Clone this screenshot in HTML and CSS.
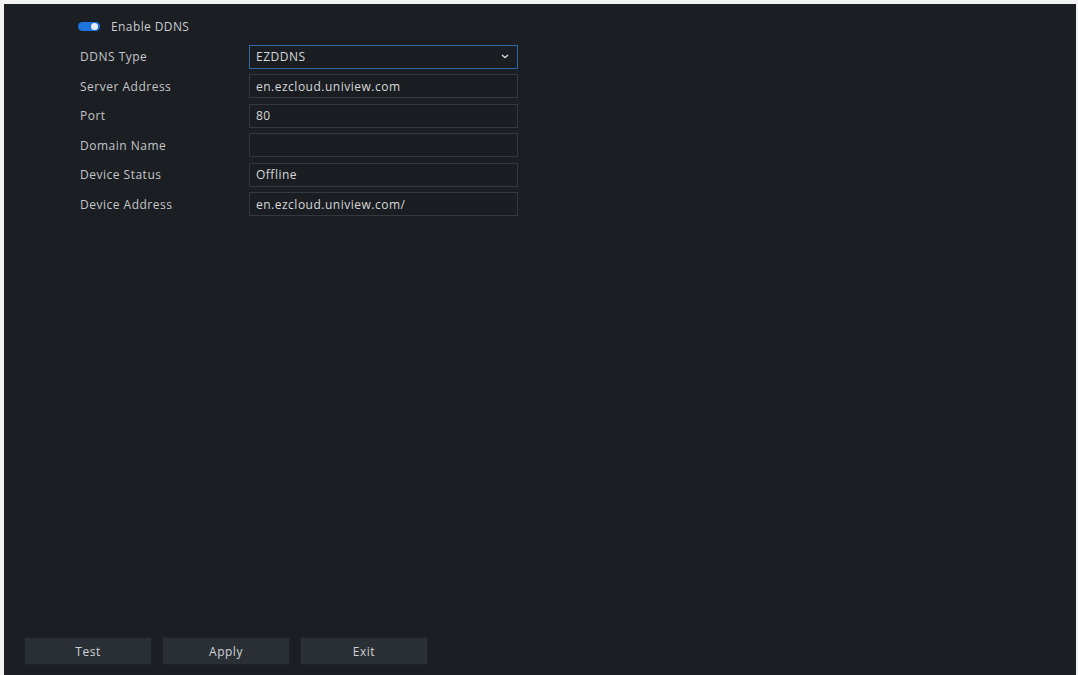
FILE: index.html
```html
<!DOCTYPE html>
<html lang="en">
  <head>
    <meta charset="utf-8" />
    <title>DDNS</title>
    <link rel="stylesheet" href="styles.css">
  </head>
  <body>
    <div class="panel">
      <div class="form">
        <div class="enable">
          <span class="switch on"><span class="knob"></span></span>
          <span class="enable-label">Enable DDNS</span>
        </div>

        <div class="row">
          <label>DDNS Type</label>
          <div class="field select">
            <span>EZDDNS</span>
            <svg class="caret" width="8" height="5" viewBox="0 0 8 5">
              <path d="M1 1 L4 3.6 L7 1" fill="none" stroke="#d8d8d8" stroke-width="1.4" />
            </svg>
          </div>
        </div>
        <div class="row">
          <label>Server Address</label>
          <div class="field">en.ezcloud.uniview.com</div>
        </div>
        <div class="row">
          <label>Port</label>
          <div class="field">80</div>
        </div>
        <div class="row">
          <label>Domain Name</label>
          <div class="field"></div>
        </div>
        <div class="row">
          <label>Device Status</label>
          <div class="field">Offline</div>
        </div>
        <div class="row">
          <label>Device Address</label>
          <div class="field">en.ezcloud.uniview.com/</div>
        </div>
      </div>

      <div class="actions">
        <button class="btn">Test</button>
        <button class="btn">Apply</button>
        <button class="btn">Exit</button>
      </div>
    </div>
  </body>
</html>
```

FILE: styles.css
```css
html, body {
  margin: 0;
  height: 100%;
}
body {
  background: #f2f2f2;
  font-family: "Open Sans", "Liberation Sans", sans-serif;
  overflow: hidden;
}
.panel {
  margin: 4px 2px 0 4px;
  height: 671px;
  background: #1b1e22;
  display: flex;
  flex-direction: column;
  box-sizing: border-box;
}
.form {
  padding: 15px 0 0 72px;
}
.enable {
  display: flex;
  align-items: center;
  height: 14px;
  margin-bottom: 9px;
}
.switch {
  display: inline-block;
  position: relative;
  width: 22px;
  height: 9px;
  border-radius: 5px;
  background: #555a60;
  margin: 0 11px 0 2px;
}
.switch.on {
  background: #1c74dc;
}
.knob {
  position: absolute;
  top: 1px;
  right: 2px;
  width: 7px;
  height: 7px;
  border-radius: 50%;
  background: #e8eef6;
}
.enable-label {
  color: #c9ccd0;
  font-size: 12px;
  letter-spacing: 0.4px;
}
.row {
  display: flex;
  align-items: center;
  height: 29.5px;
}
.row label {
  width: 173px;
  padding-left: 4px;
  box-sizing: border-box;
  color: #c4c6c9;
  font-size: 12px;
  letter-spacing: 0.5px;
}
.field {
  width: 269px;
  height: 24px;
  box-sizing: border-box;
  border: 1px solid #34393f;
  background: #1a1d21;
  color: #d6d8da;
  font-size: 12px;
  letter-spacing: 0.5px;
  padding: 0 6px;
  display: flex;
  align-items: center;
}
.field.select {
  border-color: #2e6aa8;
  justify-content: space-between;
  padding-right: 8px;
}
.actions {
  margin-top: auto;
  padding: 0 0 10px 20px;
  display: flex;
  gap: 10px;
}
.btn {
  width: 128px;
  height: 28px;
  background: #2a2f36;
  border: 1px solid #1f2329;
  color: #d0d2d5;
  font-family: inherit;
  font-size: 12px;
  letter-spacing: 0.5px;
}
```
